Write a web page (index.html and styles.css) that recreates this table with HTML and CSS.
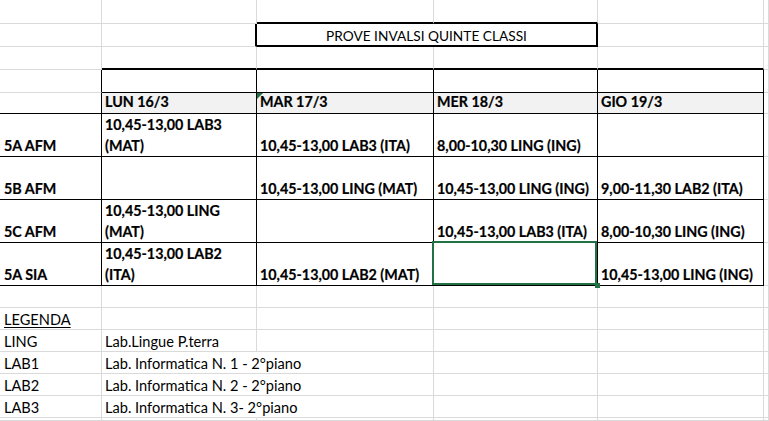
FILE: index.html
```html
<!DOCTYPE html>
<html lang="it">
<head>
<meta charset="utf-8">
<title>Prove INVALSI quinte classi</title>
<link rel="stylesheet" href="styles.css">
</head>
<body>
<div class="sheet">
  <!-- row 1 -->
  <div class="c"></div><div class="c"></div><div class="c tb"></div><div class="c tb"></div><div class="c"></div><div class="c"></div>
  <!-- row 2 -->
  <div class="c"></div><div class="c tr"></div><div class="c title tr tb">PROVE INVALSI QUINTE CLASSI</div><div class="c"></div><div class="c"></div>
  <!-- row 3 -->
  <div class="c"></div><div class="c tb"></div><div class="c tb"></div><div class="c tb"></div><div class="c tb"></div><div class="c"></div>
  <!-- row 4 -->
  <div class="c br"></div><div class="c br bb"></div><div class="c br bb"></div><div class="c br bb"></div><div class="c br bb"></div><div class="c"></div>
  <!-- row 5 -->
  <div class="c br bb"></div>
  <div class="c br bb hd b">LUN 16/3</div>
  <div class="c br bb hd b flag">MAR 17/3</div>
  <div class="c br bb hd b">MER 18/3</div>
  <div class="c br bb hd b">GIO 19/3</div>
  <div class="c"></div>
  <!-- row 6 -->
  <div class="c br bb b first">5A AFM</div>
  <div class="c br bb b">10,45-13,00 LAB3<br>(MAT)</div>
  <div class="c br bb b">10,45-13,00 LAB3 (ITA)</div>
  <div class="c br bb b">8,00-10,30 LING (ING)</div>
  <div class="c br bb b"></div>
  <div class="c"></div>
  <!-- row 7 -->
  <div class="c br bb b first">5B AFM</div>
  <div class="c br bb b"></div>
  <div class="c br bb b">10,45-13,00 LING (MAT)</div>
  <div class="c br bb b">10,45-13,00 LING (ING)</div>
  <div class="c br bb b">9,00-11,30 LAB2 (ITA)</div>
  <div class="c"></div>
  <!-- row 8 -->
  <div class="c br bb b first">5C AFM</div>
  <div class="c br bb b">10,45-13,00 LING<br>(MAT)</div>
  <div class="c br bb b"></div>
  <div class="c br bb b">10,45-13,00 LAB3 (ITA)</div>
  <div class="c br bb b">8,00-10,30 LING (ING)</div>
  <div class="c"></div>
  <!-- row 9 -->
  <div class="c br bb b first">5A SIA</div>
  <div class="c br bb b">10,45-13,00 LAB2<br>(ITA)</div>
  <div class="c br bb b">10,45-13,00 LAB2 (MAT)</div>
  <div class="c br bb b sel"></div>
  <div class="c br bb b">10,45-13,00 LING (ING)</div>
  <div class="c"></div>
  <!-- row 10 -->
  <div class="c"></div><div class="c"></div><div class="c"></div><div class="c"></div><div class="c"></div><div class="c"></div>
  <!-- row 11 -->
  <div class="c lg first"><span class="u">LEGENDA</span></div><div class="c"></div><div class="c"></div><div class="c"></div><div class="c"></div><div class="c"></div>
  <!-- row 12 -->
  <div class="c lg first">LING</div><div class="c lg">Lab.Lingue P.terra</div><div class="c"></div><div class="c"></div><div class="c"></div><div class="c"></div>
  <!-- row 13 -->
  <div class="c lg first">LAB1</div><div class="c lg nr">Lab. Informatica N. 1 - 2°piano</div><div class="c"></div><div class="c"></div><div class="c"></div><div class="c"></div>
  <!-- row 14 -->
  <div class="c lg first">LAB2</div><div class="c lg nr">Lab. Informatica N. 2 - 2°piano</div><div class="c"></div><div class="c"></div><div class="c"></div><div class="c"></div>
  <!-- row 15 -->
  <div class="c lg first">LAB3</div><div class="c lg nr">Lab. Informatica N. 3- 2°piano</div><div class="c"></div><div class="c"></div><div class="c"></div><div class="c"></div>
  <!-- row 16 -->
  <div class="c"></div><div class="c"></div><div class="c"></div><div class="c"></div><div class="c"></div><div class="c"></div>
</div>
</body>
</html>
```

FILE: styles.css
```css
html, body {
  margin: 0;
  padding: 0;
  background: #ffffff;
  overflow: hidden;
}

.sheet {
  display: grid;
  grid-template-columns: 102px 155px 177px 164px 166px 1fr;
  grid-template-rows: 24px 23px 23px 23px 21px 43px 43px 43px 43px 22px 22px 22px 22px 22px 22px 1fr;
  width: 769px;
  height: 421px;
  font-family: Lato, "Open Sans", sans-serif;
  font-size: 14.3px;
  color: #000;
}

.c {
  box-sizing: border-box;
  border-right: 1px solid #dadada;
  border-bottom: 1px solid #dadada;
  display: flex;
  align-items: flex-end;
  padding-left: 3px;
  line-height: 21px;
  white-space: nowrap;
  position: relative;
}

.first {
  padding-left: 4px;
}

.b {
  font-weight: 700;
  -webkit-text-stroke: 0.2px #000;
}

.bb {
  border-bottom: 1px solid #000;
}

.br {
  border-right: 1px solid #000;
}

.tb {
  border-bottom: 2px solid #000;
}

.tr {
  border-right: 2px solid #000;
}

.hd {
  background: #f2f2f2;
  padding-bottom: 1px;
}

.title {
  grid-column: span 2;
  justify-content: center;
  padding-left: 0;
  line-height: 19px;
  font-size: 13.7px;
}

.lg {
  line-height: 18px;
  font-size: 14.6px;
}

.nr {
  border-right-color: transparent;
}

.u {
  text-decoration: underline;
  text-underline-offset: 2px;
}

.flag::before {
  content: "";
  position: absolute;
  left: 0;
  top: 0;
  width: 6px;
  height: 6px;
  background: #1e7145;
  clip-path: polygon(0 0, 100% 0, 0 100%);
}

.sel::after {
  content: "";
  position: absolute;
  left: -2px;
  top: -2px;
  right: 0;
  bottom: 0;
  border: 2px solid #217346;
}

.sel::before {
  content: "";
  position: absolute;
  right: -3px;
  bottom: -3px;
  width: 5px;
  height: 5px;
  background: #217346;
  z-index: 1;
}
```
